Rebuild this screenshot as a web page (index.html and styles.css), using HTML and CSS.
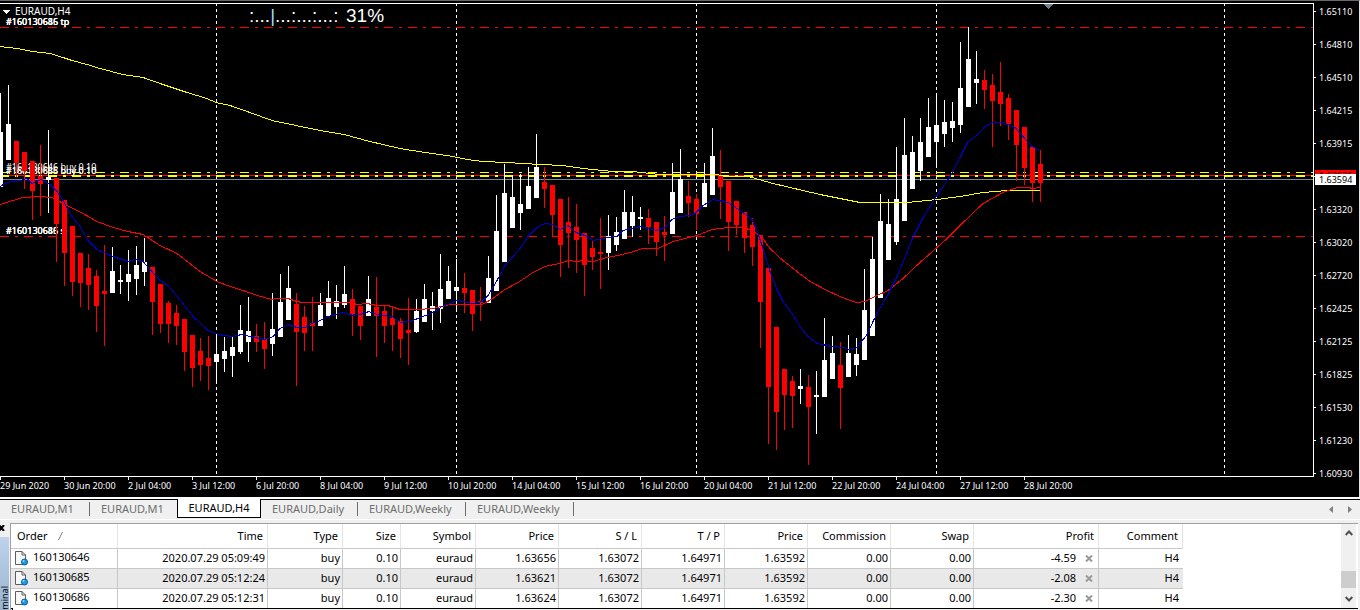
FILE: index.html
```html
<!DOCTYPE html>
<html lang="en">
<head>
<meta charset="utf-8">
<title>EURAUD,H4</title>
<link rel="stylesheet" href="styles.css">
</head>
<body>
<main class="chart">
  <div class="plot">
    <svg class="plot-canvas" role="img" aria-label="EURAUD H4 candlestick chart">
      <g transform="translate(0,-4)">
        <g class="separators">
          <path d="M216.5 3V476M456.5 3V476M696.5 3V476M936.5 3V476M1224.5 3V476"/>
        </g>
        <path class="line-ask" d="M0 175.5H4000"/>
        <path class="line-bid" d="M0 179.5H4000"/>
        <path class="level stop" d="M0 27.5H4000M0 236.5H4000"/>
        <path class="level entry" d="M0 172.5H4000"/>
        <path class="level entry double" d="M0 176H4000"/>
        <g class="order-labels">
          <text x="6" y="25">#160130646 tp</text>
          <text x="6" y="25">#160130685 tp</text>
          <text x="6" y="25">#160130686 tp</text>
          <text x="6" y="170">#160130646 buy 0.10</text>
          <text x="6" y="174">#160130685 buy 0.10</text>
          <text x="6" y="174">#160130686 buy 0.10</text>
          <text x="6" y="234">#160130646 sl</text>
          <text x="6" y="234">#160130685 sl</text>
          <text x="6" y="234">#160130686 sl</text>
        </g>
        <g class="candles" id="candles"></g>
        <polyline class="ma slow" points="0,46.5 17,48.5 33,51.5 50,53.5 63,57.5 72,60.5 87,64.5 100,68.5 123,74.5 143,77.5 163,84.5 187,92.5 207,98.5 216,102.5 230,105.5 250,112.5 272,120.5 296,125.5 320,130.5 344,134.5 370,141.5 400,148.5 425,152.5 450,156 467,159.5 483,161.5 507,162.5 540,164.5 563,165.5 583,168.5 613,171.5 637,172 650,173.5 660,174.5 715,174.5 730,176.5 750,177 773,183.5 820,194.5 840,198.5 860,202.5 907,202.5 937,199.5 960,196.5 983,192.5 1007,190.5 1040,190.5"/>
        <polyline class="ma mid" points="0,204.5 13,200.5 23,197.5 40,196.5 52,197.5 67,205.5 83,213.5 97,221.5 113,227.5 128,231.5 143,234.5 160,245.5 177,253.5 200,271.5 217,281.5 230,286.5 243,290.5 257,295.5 272,299.5 277,298.5 288,298.5 297,301.5 302,302.5 348,302.5 358,304.5 367,303.5 377,305.5 388,305.5 400,309.5 418,309.5 433,308.5 450,304.5 482,304.5 493,298.5 505,289.5 518,282.5 533,272.5 545,266.5 560,263.5 568,260.5 577,261.5 583,260.5 593,261.5 607,257.5 618,255.5 630,252.5 643,248.5 658,248.5 673,241.5 697,235.5 712,229.5 728,227.5 740,227.5 750,229.5 757,233.5 762,237.5 770,248.5 783,260.5 797,271.5 810,281.5 827,290.5 840,296.5 850,300.5 857,302.5 865,301.5 875,296.5 888,290.5 903,278.5 920,262.5 946,239.5 960,225.5 983,203.5 1003,192.5 1017,187.5 1028,187.5 1033,188.5 1040,187.5"/>
        <polyline class="ma fast" points="0,186.5 7,182.5 20,180.5 27,178.5 32,183.5 41,179.5 50,184.5 57,191.5 63,200.5 72,216.5 80,226.5 88,240.5 97,249.5 113,256.5 128,261.5 135,259.5 143,261.5 160,280.5 168,285.5 183,303.5 193,316.5 208,330.5 218,334.5 232,336.5 242,334.5 250,336.5 265,339.5 273,336.5 280,328.5 288,324.5 297,327.5 305,327.5 312,323.5 320,320.5 328,316.5 343,312.5 353,315.5 360,314.5 369,311.5 377,314.5 392,316.5 401,322.5 410,321.5 423,316.5 433,312.5 442,306.5 450,303.5 457,300.5 473,303.5 482,301.5 488,295.5 497,280.5 505,265.5 513,256.5 521,247.5 528,236.5 537,227.5 545,223.5 553,224.5 560,229.5 568,225.5 576,232.5 585,235.5 593,240.5 602,238.5 617,236.5 623,230.5 640,226.5 657,230.5 665,227.5 672,219.5 680,216.5 690,215.5 695,213.5 703,205.5 713,199.5 728,202.5 743,212.5 752,219.5 758,233.5 763,248.5 770,271.5 777,289.5 783,301.5 792,313.5 800,326.5 808,336.5 817,343.5 832,346.5 843,347.5 850,349.5 857,347.5 867,334.5 873,321.5 882,304.5 888,294.5 897,276.5 907,252.5 912,239.5 923,217.5 937,195.5 950,176.5 960,157.5 968,141.5 977,135.5 985,126.5 993,122.5 1003,122.5 1015,127.5 1023,136.5 1032,146.5 1040,150.5"/>
        <path class="shift-mark" d="M1044 4H1053L1048.500 9Z"/>
        <path class="menu-mark" d="M3 10H10L6.500 14Z"/>
        <text class="symbol" x="15" y="15">EURAUD,H4</text>
        <text class="progress" x="249" y="22">:...<tspan class="cursor">|</tspan>...:...:...:</text>
        <text class="progress" x="346" y="22">31%</text>
      </g>
    </svg>
  </div>
  <div class="price-axis">
    <span>1.65110</span><span>1.64810</span><span>1.64510</span><span>1.64215</span><span>1.63915</span><span>1.63620</span><span>1.63320</span><span>1.63020</span><span>1.62720</span><span>1.62425</span><span>1.62125</span><span>1.61825</span><span>1.61530</span><span>1.61230</span><span>1.60930</span>
    <b class="price-tag ask">1.63626</b>
    <b class="price-tag bid">1.63594</b>
  </div>
  <div class="time-axis">
    <span>29 Jun 2020</span><span>30 Jun 20:00</span><span>2 Jul 04:00</span><span>3 Jul 12:00</span><span>6 Jul 20:00</span><span>8 Jul 04:00</span><span>9 Jul 12:00</span><span>10 Jul 20:00</span><span>14 Jul 04:00</span><span>15 Jul 12:00</span><span>16 Jul 20:00</span><span>20 Jul 04:00</span><span>21 Jul 12:00</span><span>22 Jul 20:00</span><span>24 Jul 04:00</span><span>27 Jul 12:00</span><span>28 Jul 20:00</span>
  </div>
</main>

<nav class="tabs" aria-label="Open charts">
  <div class="tab-list">
    <button class="tab ruled">EURAUD,M1</button>
    <button class="tab">EURAUD,M1</button>
    <button class="tab active">EURAUD,H4</button>
    <button class="tab ruled">EURAUD,Daily</button>
    <button class="tab ruled">EURAUD,Weekly</button>
    <button class="tab ruled">EURAUD,Weekly</button>
  </div>
  <div class="tab-scroll">
    <button aria-label="Previous charts"><svg width="4" height="7"><path d="M4 0V7L0 3.500Z"/></svg></button>
    <button aria-label="Next charts"><svg width="4" height="7"><path d="M0 0V7L4 3.500Z"/></svg></button>
  </div>
</nav>

<section class="terminal">
  <aside class="side">
    <button class="close" aria-label="Close"><svg width="5" height="6"><path d="M-1 0L4 6M4 0L-1 6"/></svg></button>
    <div class="side-bar"><span>Terminal</span></div>
  </aside>
  <div class="panel">
    <div class="panel-body">
      <div class="table-area">
        <table class="orders">
          <colgroup><col class="c-order"><col class="c-time"><col class="c-type"><col class="c-size"><col class="c-type"><col class="c-num"><col class="c-num"><col class="c-num"><col class="c-num"><col class="c-num"><col class="c-num"><col class="c-profit"><col class="c-comment"></colgroup>
          <thead>
            <tr><th scope="col">Order <svg class="sort" width="5" height="8"><path d="M.5 8L4.500 0"/></svg></th><th scope="col">Time</th><th scope="col">Type</th><th scope="col">Size</th><th scope="col">Symbol</th><th scope="col">Price</th><th scope="col">S / L</th><th scope="col">T / P</th><th scope="col">Price</th><th scope="col">Commission</th><th scope="col">Swap</th><th scope="col">Profit</th><th scope="col">Comment</th></tr>
          </thead>
          <tbody>
            <tr><td><svg class="doc" width="14" height="15"><use href="#doc"/></svg>160130646</td><td>2020.07.29 05:09:49</td><td>buy</td><td>0.10</td><td>euraud</td><td>1.63656</td><td>1.63072</td><td>1.64971</td><td>1.63592</td><td>0.00</td><td>0.00</td><td>-4.59<button class="end" aria-label="Close order 160130646"><svg width="8" height="7"><use href="#cross"/></svg></button></td><td>H4</td></tr>
            <tr><td><svg class="doc" width="14" height="15"><use href="#doc"/></svg>160130685</td><td>2020.07.29 05:12:24</td><td>buy</td><td>0.10</td><td>euraud</td><td>1.63621</td><td>1.63072</td><td>1.64971</td><td>1.63592</td><td>0.00</td><td>0.00</td><td>-2.08<button class="end" aria-label="Close order 160130685"><svg width="8" height="7"><use href="#cross"/></svg></button></td><td>H4</td></tr>
            <tr><td><svg class="doc" width="14" height="15"><use href="#doc"/></svg>160130686</td><td>2020.07.29 05:12:31</td><td>buy</td><td>0.10</td><td>euraud</td><td>1.63624</td><td>1.63072</td><td>1.64971</td><td>1.63592</td><td>0.00</td><td>0.00</td><td>-2.30<button class="end" aria-label="Close order 160130686"><svg width="8" height="7"><use href="#cross"/></svg></button></td><td>H4</td></tr>
          </tbody>
        </table>
      </div>
      <div class="scrollbar">
        <button aria-label="Scroll up"><svg width="8" height="6"><path d="M.7 5L4 1.500L7.300 5"/></svg></button>
        <div class="thumb"></div>
        <button aria-label="Scroll down"><svg width="8" height="6"><path d="M.7 1L4 4.500L7.300 1"/></svg></button>
      </div>
    </div>
    <div class="panel-foot"><i></i></div>
  </div>
</section>

<svg class="symbols" aria-hidden="true">
  <defs>
    <g id="doc">
      <path d="M1.500 .5H8L11.500 4V13.500H1.500Z" fill="#f8f8f8" stroke="#5c5c5c"/>
      <path d="M8 .5V4H11.500" fill="none" stroke="#5c5c5c"/>
      <circle cx="10.500" cy="11" r="3" fill="#1b9be6" stroke="#0b5f9e"/>
      <circle cx="9.500" cy="10" r="1" fill="#8fd6ff"/>
    </g>
    <path id="cross" d="M1 .5L7 6.500M7 .5L1 6.500" fill="none" stroke="#999" stroke-width="2"/>
  </defs>
</svg>
<script src="chart.js"></script>
</body>
</html>
```

FILE: styles.css
```css
* { box-sizing: border-box; }

body {
  margin: 0;
  overflow: hidden;
  background: #f0f0f0;
  color: #000;
  font: 11px/16px "Noto Sans", "Open Sans", sans-serif;
}

button {
  margin: 0;
  padding: 0;
  border: 0;
  background: none;
  color: inherit;
  font: inherit;
}

svg { display: block; }
.symbols { position: absolute; width: 0; height: 0; }

/* Chart window */
.chart {
  display: grid;
  grid-template-columns: minmax(0, 1fr) 45px;
  grid-template-rows: auto 20px;
  padding-top: 2px;
  border-top: 1px solid #696969;
  border-right: 1px solid #e3e3e3;
  background: #000;
  color: #fff;
  font-size: 9px;
  line-height: 12px;
}

.plot {
  border: 1px solid #fff;
  border-left: 0;
}

.plot-canvas {
  width: 100%;
  height: 472px;
  shape-rendering: crispEdges;
}

.plot-canvas path, .plot-canvas polyline { fill: none; }
.separators { stroke: #fff; stroke-dasharray: 3 3; }
.line-ask { stroke: #f00; }
.line-bid { stroke: #778899; }
.level { stroke-dasharray: 9 6 3 6; }
.stop { stroke: #f00; }
.entry { stroke: #ff0; }
.double { stroke-width: 2; }
.order-labels { fill: #fff; }
.plot-canvas .bull { fill: #fff; }
.plot-canvas .bear { fill: #f00; }
.slow { stroke: #ff0; }
.mid { stroke: #f00; }
.fast { stroke: #0000cd; }
.plot-canvas .shift-mark { fill: #708090; }
.plot-canvas .menu-mark { fill: #fff; }
.symbol { fill: #fff; font-size: 10px; }
.progress { fill: #fff; font: 19px "Liberation Sans", Arial, sans-serif; }
.cursor { fill: #9fdcff; }

.price-axis {
  position: relative;
  display: flex;
  flex-direction: column;
  gap: 21px;
  margin-bottom: -6px;
  padding-top: 3px;
}

.price-axis span {
  display: flex;
  gap: 3px;
}

.price-axis span::before {
  content: "";
  width: 2px;
  height: 1px;
  margin-top: 5px;
  background: #fff;
}

.price-tag {
  position: absolute;
  left: 1px;
  width: 41px;
  padding-left: 4px;
  font-weight: 400;
  line-height: 11px;
}

.ask { top: 167px; background: #f00; color: #000; }
.bid { top: 171px; background: #fff; color: #000; }

.time-axis {
  grid-column: 1 / -1;
  display: flex;
  overflow: hidden;
}

.time-axis span {
  flex: 0 0 64px;
  white-space: nowrap;
}

.time-axis span::before {
  content: "";
  display: block;
  width: 1px;
  height: 3px;
  background: #fff;
}

/* Chart tabs */
.tabs {
  display: flex;
  justify-content: space-between;
  border-top: 2px solid #fff;
  border-bottom: 1px solid #fff;
  background: #f0f0f0;
}

.tab-list {
  flex: 1;
  display: grid;
  grid-template-columns: 90px 87px 84px 97px 108px 108px;
  height: 20px;
  border-top: 1px solid #000;
}

.tab {
  height: 14px;
  padding-left: 11px;
  margin-top: 2px;
  color: #6d6d6d;
  line-height: 14px;
  text-align: left;
}

.tab.ruled { border-right: 1px solid #6d6d6d; }

.tab.active {
  height: 19px;
  margin-top: -1px;
  padding-left: 0;
  border: 1px solid #000;
  border-top: 0;
  background: #fff;
  color: #000;
  line-height: 18px;
  text-align: center;
}

.tab-scroll {
  display: flex;
  align-items: center;
  gap: 15px;
  padding-right: 8px;
  border-top: 1px solid #000;
}

.tab-scroll path { fill: #808080; }

/* Terminal panel */
.terminal {
  display: flex;
  padding: 3px 2px 0 0;
}

.side {
  display: flex;
  flex-direction: column;
  flex: 0 0 11px;
  gap: 6px;
  padding-top: 2px;
}

.close path { fill: none; stroke: #000; stroke-width: 2; }

.side-bar {
  width: 9px;
  height: 73px;
  padding-top: 49px;
  overflow: hidden;
  background: linear-gradient(#bfd3ea, #98b4d4);
}

.side-bar span {
  display: block;
  writing-mode: vertical-rl;
  transform: rotate(180deg);
  font-size: 9px;
  line-height: 9px;
}

.panel {
  flex: 1;
  min-width: 0;
  border-top: 1px solid #a0a0a0;
  border-left: 1px solid #a0a0a0;
  margin-left: -1px;
}

.panel-body {
  display: flex;
  background: #fff;
}

.table-area {
  flex: 1;
  min-width: 0;
  overflow: hidden;
}

.orders {
  width: 1172px;
  table-layout: fixed;
  border-collapse: separate;
  border-spacing: 0;
}

.c-order { width: 107px; }
.c-time { width: 150px; }
.c-type { width: 75px; }
.c-size { width: 58px; }
.c-num { width: 83px; }
.c-profit { width: 125px; }
.c-comment { width: 84px; }

.orders th, .orders td {
  border-right: 1px solid #c8c8c8;
  border-bottom: 1px solid #c8c8c8;
  font-weight: 400;
  text-align: right;
  white-space: nowrap;
}

.orders th {
  height: 25px;
  padding: 0 4px 0 6px;
  border-right-color: #e5e5e5;
}

.orders td {
  height: 20px;
  padding: 0 2px 2px 3px;
  line-height: 16px;
}

.orders th:first-child, .orders td:first-child { text-align: left; }
.orders td:last-child { border-right: 0; padding-right: 4px; }
.orders tr:last-child td { height: 19px; }
.orders tbody tr:last-child td { border-bottom: 0; }
.orders thead tr:last-child th { height: 25px; }
.orders tbody tr:nth-child(2) { background: #e9e9e9; }

.sort { display: inline-block; margin-left: 8px; }
.sort path { stroke: #808080; fill: none; }
.doc { display: inline-block; margin-right: 5px; vertical-align: middle; }
.end { margin: 0 3px 0 9px; }
.end svg { display: inline-block; }

.scrollbar {
  display: flex;
  flex-direction: column;
  align-items: center;
  flex: 0 0 15px;
  margin-right: 2px;
  background: #f0f0f0;
}

.scrollbar button {
  display: grid;
  place-items: center;
  width: 100%;
  height: 18px;
}

.scrollbar path { fill: none; stroke: #505050; stroke-width: 2; }

.thumb {
  width: 100%;
  height: 17px;
  margin: auto 0 2px;
  background: #cdcdcd;
}

.panel-foot { border-top: 1px solid #000; height: 2px; }
.panel-foot i {
  position: relative;
  display: block;
  width: 50px;
  height: 2px;
  margin: -1px 0 0 1px;
  background: #fff;
  border-left: 1px solid #000;
}
```

FILE: chart.js
```js
// One candle per 8px step: high, body top, body bottom, low; "r" marks a falling bar.
const bars = `93 132 187 187|85 124 160 160|141 141 163 177 r|152 152 171 189 r|161 161 191 220 r|145 176 184 216 r|130 177 180 213|178 178 224 262 r
200 200 253 286 r|226 226 282 296 r|253 253 283 307 r|254 268 285 310 r|270 276 306 332 r|245 291 294 346 r|247 271 293 293|265 280 282 294
250 274 282 301|246 265 279 295|238 262 272 286|267 267 302 335 r|284 284 324 333 r|301 303 324 343 r|305 313 326 345 r|319 319 352 371 r
335 335 368 387 r|338 351 365 381 r|336 358 366 390 r|335 354 362 384|337 351 359 372|337 347 356 377|305 330 352 354|297 331 342 362
324 336 342 352 r|322 339 349 369 r|293 329 344 356|274 302 337 337|266 288 320 320|293 304 332 386 r|306 317 333 351 r|297 323 326 351 r
293 305 326 326|281 298 316 316|285 301 307 319|266 294 305 308|289 299 314 336 r|306 306 326 340 r|276 299 316 316|277 307 316 357 r
306 311 326 343 r|306 318 325 351 r|318 321 339 358 r|298 330 333 365 r|299 311 332 333|284 299 322 322|292 306 311 330|254 289 309 323
266 281 299 299|259 287 291 312|273 288 293 313 r|290 290 314 331 r|287 301 303 321 r|256 278 303 303|195 231 291 291|164 193 262 262
175 197 228 228|174 204 213 230|167 186 209 209|134 167 198 198|167 182 189 208 r|185 185 215 237 r|199 199 245 277 r|197 222 233 268 r
204 227 240 273 r|233 233 265 296 r|240 248 257 270 r|218 252 254 289 r|215 236 253 270|217 232 245 251|190 212 239 239|196 212 226 237
207 217 219 230|209 218 227 244 r|222 222 242 256 r|216 232 235 261 r|163 192 234 234|149 179 213 213|181 196 203 217 r|194 199 214 230 r
163 183 207 207|128 156 195 195|150 176 187 219 r|181 181 222 251 r|201 201 225 235 r|212 212 238 253 r|218 225 247 266 r|235 235 302 348 r
268 268 387 444 r|327 327 412 450 r|369 369 395 430 r|376 381 396 428 r|369 386 389 404|375 387 407 465 r|371 395 397 434|318 360 397 397
336 353 379 379|342 365 388 429 r|335 353 377 377|338 354 365 376|269 310 360 360|237 259 336 336|194 221 298 298|199 224 260 260
147 199 242 245|118 155 221 221|136 152 189 189|118 142 171 181|98 127 157 157|93 125 142 168|100 122 134 147|102 121 128 142
42 88 125 133|27 59 107 107|51 79 83 104|70 80 90 109 r|74 85 101 147 r|62 92 104 126 r|94 98 124 140 r|110 110 145 181 r
127 127 168 185 r|147 147 183 202 r|150 164 183 202 r`.split(/[|\n]/);

const paths = { bull: "", bear: "" };

bars.forEach((bar, i) => {
  const [high, top, bottom, low, falling] = bar.trim().split(" ");
  const x = i * 8;
  paths[falling ? "bear" : "bull"] +=
    `M${x} ${high}h1V${low}h-1ZM${x - 2} ${top}h5V${bottom}h-5Z`;
});

const layer = document.getElementById("candles");
for (const [name, d] of Object.entries(paths)) {
  const path = document.createElementNS("http://www.w3.org/2000/svg", "path");
  path.setAttribute("d", d);
  path.setAttribute("class", name);
  layer.append(path);
}
```
